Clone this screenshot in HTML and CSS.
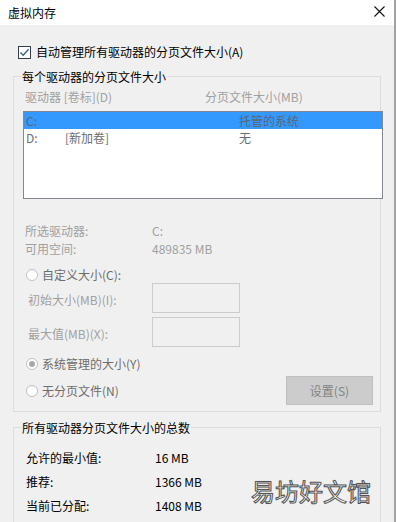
FILE: index.html
```html
<!DOCTYPE html>
<html lang="zh-CN">
<head>
  <meta charset="UTF-8">
  <title>虚拟内存</title>
  <link rel="stylesheet" href="styles.css">
</head>
<body>
  <div class="window">
    <div class="titlebar">
      <span>虚拟内存</span>
      <svg class="close" width="11" height="11" viewBox="0 0 11 11">
        <path d="M0.5 0.5 L10.5 10.5 M10.5 0.5 L0.5 10.5" stroke="#111" stroke-width="1.1" fill="none"/>
      </svg>
    </div>

    <div class="content">
      <label class="check-row">
        <span class="checkbox">
          <svg width="11" height="11" viewBox="0 0 11 11">
            <path d="M1.5 5.5 L4.2 8.3 L9.6 2.2" stroke="#2d5f93" stroke-width="1.3" fill="none"/>
          </svg>
        </span>
        自动管理所有驱动器的分页文件大小(A)
      </label>

      <fieldset class="group">
        <legend>每个驱动器的分页文件大小</legend>

        <div class="list-head">
          <span class="col-drive">驱动器 [卷标](D)</span>
          <span>分页文件大小(MB)</span>
        </div>

        <div class="listbox">
          <div class="list-row selected">
            <span class="col-drive">C:</span>
            <span>托管的系统</span>
          </div>
          <div class="list-row">
            <span class="col-drive"><span class="letter">D:</span>[新加卷]</span>
            <span>无</span>
          </div>
        </div>

        <div class="info">
          <div class="info-row"><span class="info-label">所选驱动器:</span><span>C:</span></div>
          <div class="info-row"><span class="info-label">可用空间:</span><span>489835 MB</span></div>
        </div>

        <div class="radio-row first">
          <span class="radio"></span>自定义大小(C):
        </div>
        <div class="field-row">
          <span class="field-label">初始大小(MB)(I):</span>
          <span class="field-input"></span>
        </div>
        <div class="field-row gap">
          <span class="field-label">最大值(MB)(X):</span>
          <span class="field-input"></span>
        </div>

        <div class="radio-row managed">
          <span class="radio checked"></span>系统管理的大小(Y)
        </div>
        <div class="radio-row none">
          <span class="radio"></span>无分页文件(N)
          <span class="btn">设置(S)</span>
        </div>
      </fieldset>

      <fieldset class="group totals">
        <legend>所有驱动器分页文件大小的总数</legend>
        <div class="total-row"><span class="total-label">允许的最小值:</span><span>16 MB</span></div>
        <div class="total-row"><span class="total-label">推荐:</span><span>1366 MB</span></div>
        <div class="total-row"><span class="total-label">当前已分配:</span><span>1408 MB</span></div>
      </fieldset>
    </div>

    <div class="watermark">易坊好文馆</div>
  </div>
</body>
</html>
```

FILE: styles.css
```css
body {
  margin: 0;
  background: #fff;
  font-family: "Noto Sans CJK SC", "Microsoft YaHei", sans-serif;
  font-size: 12px;
  color: #000;
}
.window {
  position: relative;
  width: 394px;
  height: 522px;
  border-right: 2px solid #a3a3a3;
  overflow: hidden;
  background: #f0f0f0;
}
.titlebar {
  height: 25px;
  background: #fff;
  display: flex;
  align-items: center;
  justify-content: space-between;
  padding: 0 9px 0 8px;
  font-size: 12px;
  color: #000;
}
.close {
  display: block;
  margin-top: -3px;
}
.content {
  background: #f0f0f0;
}
.check-row {
  display: flex;
  align-items: center;
  height: 16px;
  line-height: 16px;
  margin-top: 19px;
  padding-left: 18px;
}
.checkbox {
  width: 11px;
  height: 11px;
  border: 1px solid #333d4f;
  background: #fff;
  margin-right: 5px;
  display: flex;
}
.group {
  margin: 8px 0 0 13px;
  padding: 4px 0 6px 0;
  width: 368px;
  box-sizing: border-box;
  border: 1px solid #dcdcdc;
  min-inline-size: 0;
}
.group legend {
  margin-left: 7px;
  padding: 0 1px;
  line-height: 17px;
  color: #000;
}
.list-head {
  display: flex;
  height: 16px;
  line-height: 16px;
  padding-left: 11px;
  color: #a0a0a0;
}
.list-head .col-drive {
  width: 180px;
}
.listbox {
  margin: 6px 0 0 9px;
  width: 360px;
  height: 88px;
  box-sizing: border-box;
  border: 1px solid #828790;
  background: #fff;
}
.list-row {
  display: flex;
  height: 17px;
  line-height: 17px;
  padding-left: 2px;
  color: #6d6d6d;
}
.list-row .col-drive {
  width: 213px;
  display: flex;
}
.list-row .letter {
  width: 39px;
}
.list-row.selected {
  background: #3399ff;
  color: #5c6670;
}
.info {
  margin-top: 23px;
  padding-left: 11px;
  color: #a0a0a0;
}
.info-row {
  display: flex;
  height: 18px;
  line-height: 18px;
}
.info-label {
  width: 127px;
}
.radio-row {
  display: flex;
  align-items: center;
  height: 16px;
  line-height: 16px;
  padding-left: 12px;
  color: #6d6d6d;
}
.radio-row.first {
  margin-top: 9px;
}
.radio {
  width: 10px;
  height: 10px;
  border: 1px solid #c2c2c2;
  border-radius: 50%;
  background: #fff;
  margin-right: 4px;
  display: flex;
  align-items: center;
  justify-content: center;
}
.radio.checked::after {
  content: "";
  width: 6px;
  height: 6px;
  border-radius: 50%;
  background: #a8a8a8;
}
.field-row {
  display: flex;
  align-items: center;
  height: 30px;
  padding-left: 14px;
  color: #a0a0a0;
}
.field-row.gap {
  margin-top: 4px;
}
.field-label {
  width: 124px;
  padding-top: 2px;
}
.field-input {
  width: 88px;
  height: 30px;
  box-sizing: border-box;
  border: 1px solid #cccccc;
  background: #f0f0f0;
}
.radio-row.managed {
  margin-top: 9px;
}
.radio-row.none {
  margin-top: 4px;
  height: 29px;
}
.btn {
  margin-left: auto;
  margin-right: 7px;
  width: 87px;
  height: 29px;
  box-sizing: border-box;
  border: 1px solid #bfbfbf;
  background: #cccccc;
  color: #838383;
  display: flex;
  align-items: center;
  justify-content: center;
}
.group.totals {
  margin-top: 7px;
  padding: 10px 0 40px 0;
}
.total-row {
  display: flex;
  height: 24px;
  line-height: 24px;
  padding-left: 12px;
}
.total-label {
  width: 129px;
}
.watermark {
  position: absolute;
  left: 251px;
  top: 474px;
  font-size: 24px;
  line-height: 34px;
  color: #fff;
  -webkit-text-stroke: 1px #555;
  text-shadow: 0 0 1px #888;
}
```
